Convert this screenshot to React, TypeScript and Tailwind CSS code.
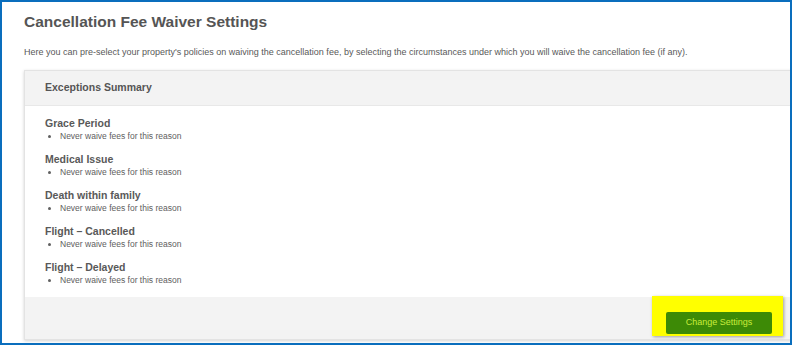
import React from 'react';

const reasons = [
  'Grace Period',
  'Medical Issue',
  'Death within family',
  'Flight \u2013 Cancelled',
  'Flight \u2013 Delayed',
];

export default function App() {
  return (
    <div className="w-[792px] h-[345px] overflow-hidden border-2 border-[#0a6ebd] bg-white pl-[22px] pt-[10px] text-[#595959] font-['Liberation_Sans',Arial,sans-serif]">
      <h1 className="text-[15.5px] leading-[20px] font-bold text-[#555]">Cancellation Fee Waiver Settings</h1>
      <p className="mt-[14px] text-[9px] leading-[12px] whitespace-nowrap">
        Here you can pre-select your property's policies on waiving the cancellation fee, by selecting the circumstances under which you will waive the cancellation fee (if any).
      </p>

      {/* Summary card */}
      <div className="mt-[12px] mr-[-14px] border border-[#e3e3e3] shadow-[0_1px_3px_rgba(0,0,0,0.18)]">
        <div className="h-[35px] flex items-center pl-[20px] bg-[#f3f3f3] border-b border-[#e8e8e8] text-[10.5px] font-bold text-[#555]">
          Exceptions Summary
        </div>

        <div className="pl-[20px] pt-[11px] pb-[10px] flex flex-col gap-[10px]">
          {reasons.map((r) => (
            <div key={r}>
              <div className="text-[10.5px] leading-[13px] font-bold text-[#595959]">{r}</div>
              <ul className="list-disc pl-[15px] text-[8.5px] leading-[13px] text-[#606060]">
                <li>Never waive fees for this reason</li>
              </ul>
            </div>
          ))}
        </div>

        <div className="h-[42px] bg-[#f3f3f3] flex justify-end items-start pr-[20px]">
          <div className="-mt-px h-[40px] bg-[#ffff00] pl-[14px] pr-[11px] pt-[12px] shadow-[1px_1px_3px_rgba(0,0,0,0.35)]">
            <button className="w-[106px] h-[22px] rounded-[2px] bg-[#3d8a06] text-[9px] text-[#c9ec3c] font-['Liberation_Sans',Arial,sans-serif]">
              Change Settings
            </button>
          </div>
        </div>
      </div>
    </div>
  );
}
